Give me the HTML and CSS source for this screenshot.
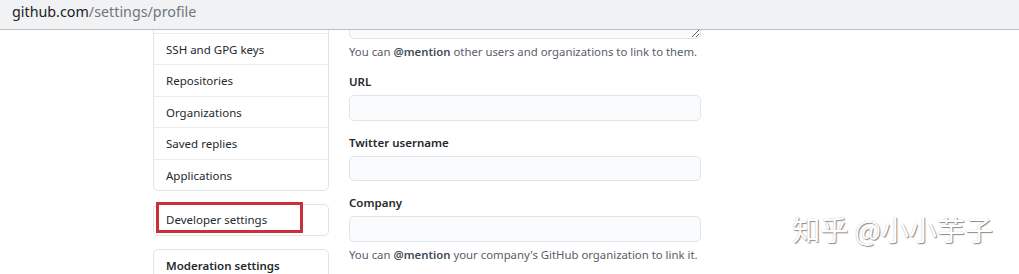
FILE: index.html
```html
<!DOCTYPE html>
<html lang="en">
<head>
    <meta charset="UTF-8">
    <title>github.com/settings/profile</title>
    <link rel="stylesheet" href="styles.css">
</head>
<body>
<div class="urlbar">
    <span class="host">github.com</span><span class="path">/settings/profile</span>
</div>
<div class="page">
    <div class="layout">
        <div class="sidebar">
            <div class="menu">
                <a class="menu-item" href="#">Security log</a>
                <a class="menu-item" href="#">SSH and GPG keys</a>
                <a class="menu-item" href="#">Repositories</a>
                <a class="menu-item" href="#">Organizations</a>
                <a class="menu-item" href="#">Saved replies</a>
                <a class="menu-item" href="#">Applications</a>
            </div>
            <div class="menu menu-dev">
                <a class="menu-item" href="#">Developer settings</a>
                <span class="mark"></span>
            </div>
            <div class="menu">
                <span class="menu-heading">Moderation settings</span>
            </div>
        </div>

        <div class="main">
            <textarea class="form-control bio"></textarea>
            <p class="note">You can <strong>@mention</strong> other users and organizations to link to them.</p>

            <div class="form-group">
                <label for="url">URL</label>
                <input type="text" class="form-control" id="url">
            </div>

            <div class="form-group">
                <label for="twitter">Twitter username</label>
                <input type="text" class="form-control" id="twitter">
            </div>

            <div class="form-group">
                <label for="company">Company</label>
                <input type="text" class="form-control" id="company">
                <p class="note">You can <strong>@mention</strong> your company's GitHub organization to link it.</p>
            </div>
        </div>
    </div>
</div>
<div class="watermark">知乎 @小小芋子</div>
</body>
</html>
```

FILE: styles.css
```css
body {
    margin: 0;
    font-family: "Noto Sans", "Liberation Sans", sans-serif;
    color: #24292e;
    background: #ffffff;
}

.urlbar {
    height: 29px;
    background-color: #f1f2f3;
    border-bottom: 1px solid #bfbfbf;
    padding-left: 12px;
    font-size: 14.3px;
    line-height: 23px;
    white-space: nowrap;
}

.host {
    color: #202124;
}

.path {
    color: #70757a;
}

.page {
    height: 244px;
    overflow: hidden;
}

.layout {
    display: flex;
    align-items: flex-start;
    gap: 20px;
    padding-left: 153px;
    margin-top: -29px;
}

/* 左侧菜单 */
.sidebar {
    width: 176px;
    flex: none;
}

.menu {
    border: 1px solid #e1e4e8;
    border-radius: 5px;
    margin-bottom: 13px;
    position: relative;
}

.menu-item {
    display: block;
    height: 31.5px;
    line-height: 31.5px;
    padding: 0 12px;
    box-sizing: border-box;
    border-top: 1px solid #eaecef;
    color: #24292e;
    font-size: 11.5px;
    text-decoration: none;
    white-space: nowrap;
}

.menu-item:first-child {
    height: 30.5px;
    border-top: none;
}

.menu-dev .menu-item {
    height: 29.5px;
    line-height: 30px;
}

.menu-heading {
    display: block;
    padding: 0 12px;
    line-height: 31px;
    font-size: 11.5px;
    font-weight: 600;
}

/* 标注框 */
.mark {
    position: absolute;
    left: 2px;
    top: -3px;
    width: 147px;
    height: 31px;
    border: 3px solid #c9303a;
    box-sizing: border-box;
}

/* 右侧表单 */
.main {
    width: 352px;
    flex: none;
}

.form-control {
    display: block;
    width: 100%;
    height: 25.5px;
    box-sizing: border-box;
    background-color: #fafbfc;
    border: 1px solid #e1e4e8;
    border-radius: 5px;
    margin: 0;
    font-family: inherit;
}

.bio {
    height: 38px;
    resize: vertical;
}

.note {
    margin: 4px 0 0 0;
    font-size: 11.35px;
    line-height: 18px;
    color: #586069;
    white-space: nowrap;
}

.note strong {
    color: #444d56;
    font-weight: 600;
}

.form-group {
    margin-top: 12px;
}

.form-group + .form-group {
    margin-top: 13px;
}

.form-group label {
    display: block;
    font-size: 11.5px;
    font-weight: 600;
    line-height: 18px;
    margin-bottom: 4px;
}

/* 水印 */
.watermark {
    position: absolute;
    right: 26px;
    top: 211px;
    font-family: "Noto Sans CJK SC", sans-serif;
    font-size: 28px;
    line-height: 36px;
    color: #ffffff;
    text-shadow: 1px 1px 1px #8a8a8a, 0 0 1px #b0b0b0;
}
```
